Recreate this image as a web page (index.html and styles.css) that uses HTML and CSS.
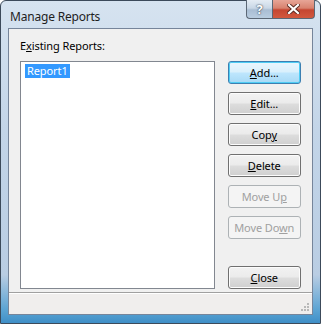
FILE: index.html
```html
<!DOCTYPE html>
<html lang="en">
  <head>
    <meta charset="UTF-8" />
    <title>Manage Reports</title>
    <link rel="stylesheet" href="styles.css">
  </head>
  <body>
    <div class="window">
      <div class="titlebar">
        <span class="title">Manage Reports</span>
        <div class="caption-buttons">
          <div class="cap-btn help">?</div>
          <div class="cap-btn close">
            <svg width="13" height="10" viewBox="0 0 13 10">
              <path d="M2 1 L11 9 M11 1 L2 9" stroke="#5a2a22" stroke-width="4" stroke-linecap="square" fill="none" />
              <path d="M2 1 L11 9 M11 1 L2 9" stroke="#fff" stroke-width="2.2" stroke-linecap="square" fill="none" />
            </svg>
          </div>
        </div>
      </div>
      <div class="client">
        <div class="content">
          <div class="list-col">
            <div class="label">E<u>x</u>isting Reports:</div>
            <div class="listbox">
              <span class="item selected">Report1</span>
            </div>
          </div>
          <div class="btn-col">
            <button class="btn default"><u>A</u>dd...</button>
            <button class="btn"><u>E</u>dit...</button>
            <button class="btn">Cop<u>y</u></button>
            <button class="btn"><u>D</u>elete</button>
            <button class="btn" disabled>Move U<u>p</u></button>
            <button class="btn" disabled>Move Do<u>w</u>n</button>
            <div class="spacer"></div>
            <button class="btn last"><u>C</u>lose</button>
          </div>
        </div>
        <div class="statusbar">
          <span class="grip">
            <svg width="10" height="10" viewBox="0 0 10 10">
              <g fill="#b8b8b8">
                <rect x="7" y="1" width="2" height="2" />
                <rect x="4" y="4" width="2" height="2" />
                <rect x="7" y="4" width="2" height="2" />
                <rect x="1" y="7" width="2" height="2" />
                <rect x="4" y="7" width="2" height="2" />
                <rect x="7" y="7" width="2" height="2" />
              </g>
            </svg>
          </span>
        </div>
      </div>
    </div>
  </body>
</html>
```

FILE: styles.css
```css
body {
  margin: 0;
  padding: 0;
  font-family: "Noto Sans", "Open Sans", sans-serif;
  font-size: 11px;
  letter-spacing: -0.1px;
  background-color: #fff;
}
.window {
  width: 321px;
  height: 324px;
  box-sizing: border-box;
  border: 1px solid #3c4a5a;
  border-radius: 6px 6px 0 0;
  background: linear-gradient(to bottom, #d6e3f0 0%, #c3d5e8 40%, #b9cde3 85%, #5aa3d3 96%, #3f8fc7 100%);
  padding: 0 7px 8px 7px;
  display: flex;
  flex-direction: column;
}
.titlebar {
  height: 27px;
  display: flex;
  justify-content: space-between;
  align-items: flex-start;
  flex-shrink: 0;
}
.title {
  font-size: 12px;
  letter-spacing: -0.2px;
  color: #1e1e1e;
  margin-top: 7px;
  margin-left: 2px;
}
.caption-buttons {
  display: flex;
  margin-top: -1px;
  margin-right: -2px;
}
.cap-btn {
  height: 19px;
  box-sizing: border-box;
  border: 1px solid #5b6775;
  border-top: none;
  display: flex;
  align-items: center;
  justify-content: center;
}
.cap-btn.help {
  width: 26px;
  border-radius: 0 0 0 4px;
  border-right: none;
  background: linear-gradient(to bottom, #e4ecf4 0%, #c9d7e6 45%, #a9bdd3 55%, #b9cde0 100%);
  color: #fff;
  font-weight: bold;
  font-size: 13px;
  text-shadow: 0 0 2px #3c4a5a, 0 0 1px #3c4a5a;
}
.cap-btn.close {
  width: 43px;
  border-radius: 0 0 4px 0;
  background: linear-gradient(to bottom, #e7a597 0%, #d8826f 45%, #c54631 55%, #d2583e 100%);
}
.client {
  flex: 1;
  border: 1px solid #76859a;
  background-color: #f0f0f0;
  display: flex;
  flex-direction: column;
}
.content {
  flex: 1;
  display: flex;
  padding: 9px 11px 3px 11px;
}
.list-col {
  width: 196px;
  display: flex;
  flex-direction: column;
}
.label {
  color: #000;
  height: 23px;
  line-height: 16px;
}
.listbox {
  flex: 1;
  background-color: #fff;
  border: 1px solid #828790;
  padding: 1px 4px;
}
.item {
  display: inline-block;
  padding: 0 2px;
  line-height: 14px;
}
.item.selected {
  background-color: #3399ff;
  color: #fff;
}
.btn-col {
  margin-left: 13px;
  width: 74px;
  display: flex;
  flex-direction: column;
  padding-top: 23px;
}
.btn {
  height: 23px;
  margin-bottom: 8px;
  font-family: inherit;
  font-size: 11px;
  letter-spacing: -0.1px;
  color: #000;
  border: 1px solid #707070;
  border-radius: 3px;
  background: linear-gradient(to bottom, #f2f2f2 0%, #ebebeb 48%, #dddddd 52%, #cfcfcf 100%);
  box-shadow: inset 0 0 0 1px #fcfcfc;
  padding: 0;
}
.btn.last {
  margin-bottom: 0;
}
.btn.default {
  border-color: #3c7fb1;
  box-shadow: inset 0 0 0 1px #4fcdf4;
  background: linear-gradient(to bottom, #eaf6fd 0%, #d9f0fc 48%, #bee6fd 52%, #a7d9f5 100%);
}
.btn:disabled {
  color: #a0a0a0;
  border-color: #adb2b5;
  background: #f4f4f4;
  box-shadow: none;
}
.spacer {
  flex: 1;
}
.statusbar {
  height: 21px;
  border-top: 1px solid #a0a0a0;
  background-color: #f0eeed;
  box-shadow: inset 0 1px 0 #fff;
  display: flex;
  justify-content: flex-end;
  align-items: flex-end;
}
.grip {
  display: flex;
  margin: 0 2px 2px 0;
}
```
